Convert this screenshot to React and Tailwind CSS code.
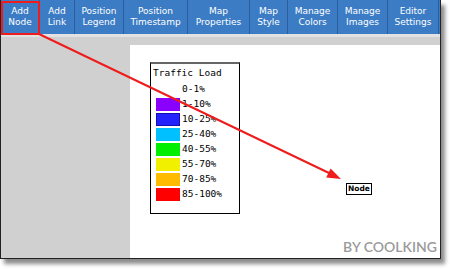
import React from "react";

const buttons = [
  { l1: "Add", l2: "Node", w: "w-[39px]" },
  { l1: "Add", l2: "Link", w: "w-[35px]" },
  { l1: "Position", l2: "Legend", w: "w-[49px]" },
  { l1: "Position", l2: "Timestamp", w: "w-[64px]" },
  { l1: "Map", l2: "Properties", w: "w-[62px]" },
  { l1: "Map", l2: "Style", w: "w-[38px]" },
  { l1: "Manage", l2: "Colors", w: "w-[50px]" },
  { l1: "Manage", l2: "Images", w: "w-[50px]" },
  { l1: "Editor", l2: "Settings", w: "w-[51px]" },
];

const legend = [
  { label: "1-10%", c: "bg-[#8a00ff]" },
  { label: "10-25%", c: "bg-[#2323ff] border border-[#1010b0]" },
  { label: "25-40%", c: "bg-[#00c0ff]" },
  { label: "40-55%", c: "bg-[#00ee00]" },
  { label: "55-70%", c: "bg-[#f0f000]" },
  { label: "70-85%", c: "bg-[#ffbb00]" },
  { label: "85-100%", c: "bg-[#ff0000]" },
];

export default function App() {
  return (
    <div className="relative w-[450px] h-[269px] bg-white overflow-hidden">
      <div className="w-[441px] h-[259px] border-l border-r border-b border-[#222] shadow-[4px_5px_4px_rgba(0,0,0,0.45)] flex flex-col bg-[#d0d0d0]">
        <div className="h-[34px] flex bg-[#3b7cc5] shrink-0" style={{ fontFamily: "'DejaVu Sans', Verdana, sans-serif" }}>
          {buttons.map((b, i) => (
            <div
              key={i}
              className={`${b.w} h-full border-r border-[#2a5e9e] flex flex-col items-center justify-center text-white text-[9px] leading-[11px] shrink-0`}
            >
              <span>{b.l1}</span>
              <span>{b.l2}</span>
            </div>
          ))}
        </div>
        <div className="h-[3px] bg-[#e2e2e2] shrink-0" />
        <div className="flex-1 flex pt-[8px] pl-[129px]">
          <div className="relative flex-1 bg-white">
            <div className="absolute left-[20px] top-[17px] w-[90px] h-[152px] border border-black border-t-2 border-t-[#666] bg-white pl-[2px] pt-[3px]" style={{ fontFamily: "'DejaVu Sans Mono', monospace" }}>
              <div className="text-[9.5px] leading-[12px] text-black">Traffic Load</div>
              <div className="flex flex-col mt-[3px]">
                <div className="flex items-center h-[15px] pl-[29px] text-[9.5px] text-black">0-1%</div>
                {legend.map((r) => (
                  <div key={r.label} className="flex items-center h-[15px]">
                    <div className={`w-[24px] h-[13px] ml-[3px] ${r.c}`} />
                    <span className="ml-[2px] text-[9.5px] text-black">{r.label}</span>
                  </div>
                ))}
              </div>
            </div>
            <div
              className="absolute left-[216px] top-[138px] w-[26px] h-[12px] border border-black bg-white flex items-center justify-center text-[7.5px] font-bold text-black"
              style={{ fontFamily: "'DejaVu Sans', Verdana, sans-serif" }}
            >
              Node
            </div>
            <div
              className="absolute right-[3px] bottom-[1px] text-[14px] font-semibold text-[#9a9a9a]"
              style={{ fontFamily: "Lato, sans-serif" }}
            >
              BY COOLKING
            </div>
          </div>
        </div>
      </div>
      <div className="absolute left-[1px] top-[1px] w-[39px] h-[34px] border-2 border-[#ee1c1c]" />
      <svg className="absolute left-0 top-0" width="450" height="269">
        <line x1="39" y1="34" x2="329" y2="173" stroke="#ee1c1c" strokeWidth="2" />
        <polygon points="341,179 326.2,177.4 330.6,168.4" fill="#ee1c1c" />
      </svg>
    </div>
  );
}
